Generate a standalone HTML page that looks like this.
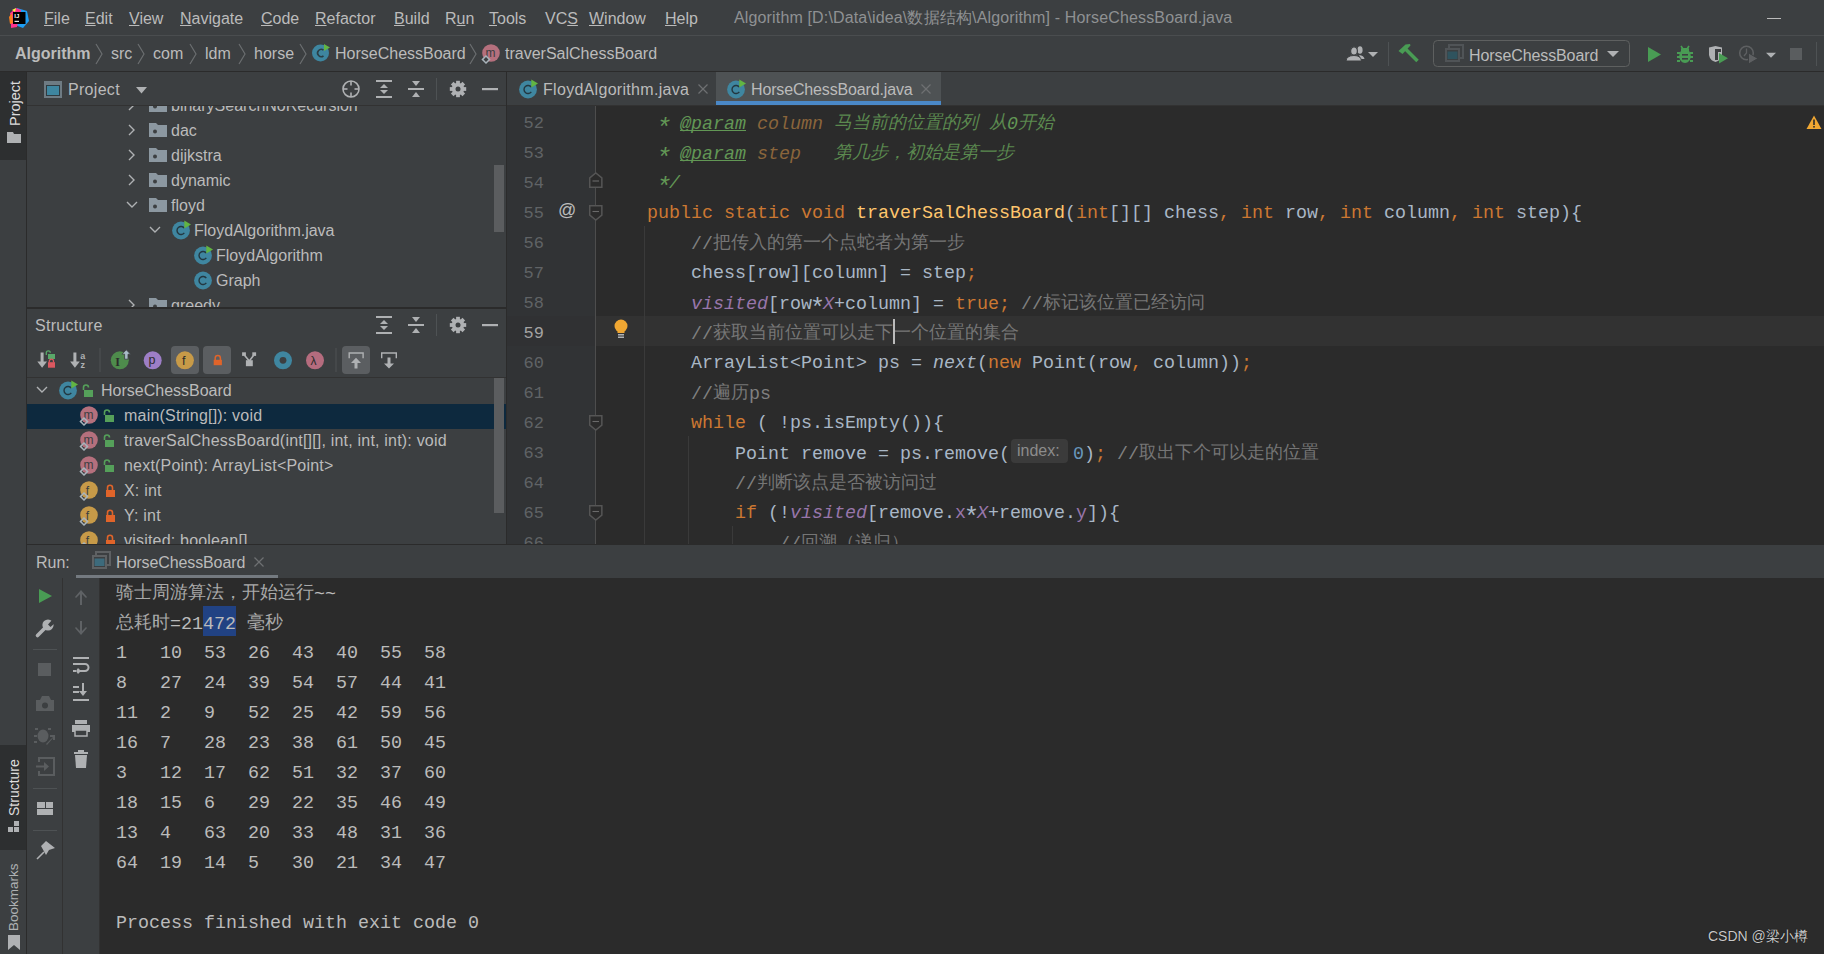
<!DOCTYPE html>
<html><head><meta charset="utf-8">
<style>
*{margin:0;padding:0;box-sizing:border-box}
html,body{width:1824px;height:954px;overflow:hidden;background:#3C3F41;font-family:"Liberation Sans",sans-serif;color:#BBBBBB;font-size:16px}
.a{position:absolute}
.t{position:absolute;white-space:pre;line-height:20px;margin-top:1px}
.m{font-family:"Liberation Mono",monospace}
.u{text-decoration:underline;text-underline-offset:1px;text-decoration-thickness:1px}
.cj{font-size:18px;position:relative;top:-1.5px;opacity:0.88}
svg{position:absolute;overflow:visible}
.code{margin-top:0;line-height:30px;font-size:18.33px;color:#A9B7C6}
.code i{font-style:italic}
.ast{display:inline-block;width:11px;transform:translateY(5px) scale(1.4)}
.inl{display:inline-block;font-family:"Liberation Sans",sans-serif;font-size:16px;color:#8C8C8C;background:#3B3B3B;border-radius:4px;width:57px;height:24px;line-height:24px;padding-left:6px;margin:0 5px 0 1px;vertical-align:3px}
</style></head><body>
<!-- MENU BAR -->
<div class="a" style="left:0;top:35px;width:1824px;height:1px;background:#4A4D4F"></div>
<svg style="left:8px;top:7px" width="22" height="22" viewBox="0 0 22 22">
<polygon points="9,1 19,4 21,14 15,21 7,18" fill="#1E9DF2"/>
<polygon points="2,6 8,1 13,3 9,20 3,21 3,13" fill="#FF318C"/>
<polygon points="1,10 4,6 5,16 2,17" fill="#FC801D"/>
<polygon points="4,3 8,1 7,5" fill="#FCF84A"/>
<rect x="5" y="5" width="12.5" height="12" fill="#000"/>
<text x="6.3" y="11" font-family="Liberation Sans" font-weight="bold" font-size="6" fill="#fff">IJ</text>
<rect x="6.5" y="13.8" width="4.5" height="1.1" fill="#fff"/>
</svg>
<div class="t" style="left:44px;top:7.5px"><span class="u">F</span>ile</div>
<div class="t" style="left:85px;top:7.5px"><span class="u">E</span>dit</div>
<div class="t" style="left:129px;top:7.5px"><span class="u">V</span>iew</div>
<div class="t" style="left:180px;top:7.5px"><span class="u">N</span>avigate</div>
<div class="t" style="left:261px;top:7.5px"><span class="u">C</span>ode</div>
<div class="t" style="left:315px;top:7.5px"><span class="u">R</span>efactor</div>
<div class="t" style="left:394px;top:7.5px"><span class="u">B</span>uild</div>
<div class="t" style="left:445px;top:7.5px">R<span class="u">u</span>n</div>
<div class="t" style="left:489px;top:7.5px"><span class="u">T</span>ools</div>
<div class="t" style="left:545px;top:7.5px">VC<span class="u">S</span></div>
<div class="t" style="left:589px;top:7.5px"><span class="u">W</span>indow</div>
<div class="t" style="left:665px;top:7.5px"><span class="u">H</span>elp</div>
<div class="t" style="left:734px;top:6.5px;color:#8F9193;letter-spacing:0.15px">Algorithm [D:\Data\idea\数据结构\Algorithm] - HorseChessBoard.java</div>
<div class="a" style="left:1767px;top:18px;width:14px;height:1px;background:#BBBBBB"></div>

<!-- NAV BAR -->
<div class="a" style="left:0;top:71px;width:1824px;height:1px;background:#2B2B2B"></div>
<div class="t" style="left:15px;top:43px;font-weight:bold">Algorithm</div>
<div class="t" style="left:111px;top:43px">src</div>
<div class="t" style="left:153px;top:43px">com</div>
<div class="t" style="left:205px;top:43px">ldm</div>
<div class="t" style="left:254px;top:43px">horse</div>
<div class="t" style="left:335px;top:43px">HorseChessBoard</div>
<div class="t" style="left:505px;top:43px">traverSalChessBoard</div>
<svg style="left:0;top:36px" width="500" height="36">
<g stroke="#6B6E70" stroke-width="1.2" fill="none">
<polyline points="96,8 102,18 96,28"/><polyline points="138,8 144,18 138,28"/>
<polyline points="190,8 196,18 190,28"/><polyline points="239,8 245,18 239,28"/>
<polyline points="300,8 306,18 300,28"/><polyline points="470,8 476,18 470,28"/>
</g>
</svg>
<!-- class icon in nav -->
<svg style="left:312px;top:43px" width="19" height="19" viewBox="0 0 19 19">
<circle cx="8.5" cy="10" r="8.5" fill="#3E86A0"/>
<path d="M11.5 7.2 A3.6 3.6 0 1 0 11.5 12.8" stroke="#2B3E45" stroke-width="1.6" fill="none"/>
<polygon points="12,1 18,4.5 12,8" fill="#62B543"/>
</svg>
<!-- method icon in nav -->
<svg style="left:480px;top:43px" width="22" height="22" viewBox="0 0 22 22"><circle cx="11" cy="10" r="8.8" fill="#B5707D"/><text x="5.6" y="14.2" font-family="Liberation Sans" font-size="12" fill="#3C3F41">m</text><rect x="3.5" y="14" width="5" height="5" transform="rotate(45 6 16.5)" fill="#3C3F41" stroke="#A9B4BB" stroke-width="1.5"/></svg>
<!-- right toolbar -->
<svg style="left:1340px;top:36px" width="484" height="36">
<g fill="#AFB1B3">
<ellipse cx="20" cy="14" rx="2.6" ry="3.8"/><path d="M19 19 Q24 19.5 24.5 23 L21 23 Z"/>
<ellipse cx="14" cy="15" rx="3.4" ry="4.2" stroke="#3C3F41" stroke-width="1.2"/>
<path d="M6 25 Q6.5 19.5 14 19.5 Q21 19.5 21.5 25 Z" stroke="#3C3F41" stroke-width="1"/>
<polygon points="28,16 38,16 33,21"/>
</g>
<rect x="48" y="6" width="1" height="24" fill="#4E5254"/>
<g fill="#499C54">
<polygon points="58.5,15 65.5,8.5 70,8 70.5,9.5 62.5,18"/>
<line x1="65" y1="12.5" x2="77.5" y2="25" stroke="#499C54" stroke-width="3.6"/>
</g>
<rect x="93.5" y="4.5" width="196" height="26" rx="4" fill="none" stroke="#5E6060"/>
<g>
<g transform="translate(104 8)"><path d="M5 4 V1 H19 V14 H16" fill="none" stroke="#505457" stroke-width="2"/><rect x="2" y="5" width="13" height="12" fill="#3C3F41" stroke="#505457" stroke-width="2"/><rect x="3.5" y="7.5" width="10" height="7.5" fill="#2F535E"/></g>
</g>
<polygon points="267,15 279,15 273,21" fill="#AFB1B3"/>
<polygon points="308,11 321,18.5 308,26" fill="#499C54"/>
<g fill="#499C54">
<ellipse cx="345" cy="20" rx="5.8" ry="7"/>
<rect x="341" y="12" width="8" height="4" rx="1"/>
<path d="M341 10 L343 13 M349 10 L347 13" stroke="#499C54" stroke-width="1.6"/>
<rect x="337" y="16" width="3" height="2"/><rect x="350" y="16" width="3" height="2"/>
<rect x="337" y="20" width="3" height="2"/><rect x="350" y="20" width="3" height="2"/>
<rect x="337" y="24" width="3" height="2"/><rect x="350" y="24" width="3" height="2"/>
</g>
<g fill="#3C3F41"><rect x="342" y="18" width="6" height="1.6"/><rect x="342" y="22" width="6" height="1.6"/></g>
<path d="M369 11.5 L375.5 10 L382 11.5 L382 19 Q381 24.5 375.5 26 Q370 24.5 369 19 Z" fill="#AFB1B3"/>
<path d="M375 13 H381 V16 H378 V24 H375 Z" fill="#3C3F41"/>
<polygon points="379,17 388,22.3 379,27.5" fill="#499C54"/>
<circle cx="406.5" cy="17" r="6.8" fill="none" stroke="#5E6062" stroke-width="1.6"/>
<path d="M406.5 12.5 V17 L404 20" fill="none" stroke="#5E6062" stroke-width="1.3"/>
<polygon points="408.5,17 418,22.5 408.5,28" fill="#5E6062" stroke="#3C3F41" stroke-width="1"/>
<polygon points="426,16.8 436,16.8 431,21.8" fill="#AFB1B3"/>
<rect x="450" y="12" width="12" height="12" fill="#5A5D5F"/>
<rect x="476" y="6" width="1" height="24" fill="#4E5254"/>
</svg>
<div class="t" style="left:1469px;top:45px;letter-spacing:-0.1px">HorseChessBoard</div>
<!-- LEFT STRIPE -->
<div class="a" style="left:0;top:72px;width:26px;height:882px;background:#3C3F41"></div>
<div class="a" style="left:26px;top:72px;width:1px;height:882px;background:#2B2B2B"></div>
<div class="a" style="left:0;top:72px;width:26px;height:88px;background:#2D2F30"></div>
<div class="t" style="left:5.3px;top:125px;transform:rotate(-90deg);transform-origin:0 0;color:#DDDDDD;font-size:14.5px;width:50px">Project</div>
<svg style="left:7px;top:132px" width="14" height="12"><path d="M0 0 H6 L7 2 H14 V11 H0 Z" fill="#AFB1B3"/></svg>
<div class="a" style="left:0;top:745px;width:26px;height:105px;background:#2D2F30"></div>
<div class="t" style="left:4px;top:815px;transform:rotate(-90deg);transform-origin:0 0;color:#DDDDDD;font-size:14px;width:70px">Structure</div>
<svg style="left:8px;top:821px" width="13" height="13"><g fill="#AFB1B3"><rect x="0" y="6" width="5" height="5"/><rect x="6" y="6" width="5" height="5"/><rect x="6" y="0" width="5" height="5"/></g></svg>
<div class="t" style="left:4px;top:930px;transform:rotate(-90deg);transform-origin:0 0;color:#AFB1B3;font-size:13.5px;width:80px">Bookmarks</div>
<svg style="left:8px;top:935px" width="12" height="16"><path d="M0 0 H12 V15 L6 10 L0 15 Z" fill="#AFB1B3"/></svg>

<!-- PROJECT PANEL -->
<div class="a" style="left:27px;top:105px;width:479px;height:1px;background:#323232"></div>
<svg style="left:44px;top:81px" width="19" height="18"><rect x="0" y="0" width="18" height="17" fill="#6E7B83"/><rect x="2" y="4" width="14" height="11" fill="#2F3B41"/><rect x="3" y="5" width="12" height="9" fill="#3E86A0"/></svg>
<div class="t" style="left:68px;top:79px;letter-spacing:0.3px">Project</div>
<svg style="left:135.5px;top:87px" width="12" height="8"><polygon points="0,0 11,0 5.5,6.5" fill="#AFB1B3"/></svg>
<svg style="left:340px;top:78px" width="170" height="22">
<g fill="none" stroke="#AFB1B3" stroke-width="1.6"><circle cx="11" cy="11" r="8"/><line x1="11" y1="3" x2="11" y2="7.5"/><line x1="11" y1="14.5" x2="11" y2="19"/><line x1="3" y1="11" x2="7.5" y2="11"/><line x1="14.5" y1="11" x2="19" y2="11"/></g>
<g fill="#AFB1B3"><rect x="36" y="2" width="16" height="2"/><rect x="36" y="18" width="16" height="2"/><polygon points="44,6 48,10 40,10"/><polygon points="44,16 48,12 40,12"/></g>
<g fill="#AFB1B3"><rect x="68" y="10" width="16" height="2"/><polygon points="76,8 80,3 72,3"/><polygon points="76,14 80,19 72,19"/></g>
<rect x="96" y="0" width="1" height="22" fill="#4E5254"/>
<circle cx="118" cy="11" r="6.2" fill="#AFB1B3"/><rect x="116.1" y="2.8000000000000007" width="3.8" height="4" fill="#AFB1B3" transform="rotate(0 118 11)"/><rect x="116.1" y="2.8000000000000007" width="3.8" height="4" fill="#AFB1B3" transform="rotate(45 118 11)"/><rect x="116.1" y="2.8000000000000007" width="3.8" height="4" fill="#AFB1B3" transform="rotate(90 118 11)"/><rect x="116.1" y="2.8000000000000007" width="3.8" height="4" fill="#AFB1B3" transform="rotate(135 118 11)"/><rect x="116.1" y="2.8000000000000007" width="3.8" height="4" fill="#AFB1B3" transform="rotate(180 118 11)"/><rect x="116.1" y="2.8000000000000007" width="3.8" height="4" fill="#AFB1B3" transform="rotate(225 118 11)"/><rect x="116.1" y="2.8000000000000007" width="3.8" height="4" fill="#AFB1B3" transform="rotate(270 118 11)"/><rect x="116.1" y="2.8000000000000007" width="3.8" height="4" fill="#AFB1B3" transform="rotate(315 118 11)"/><circle cx="118" cy="11" r="2.5" fill="#3C3F41"/>
<rect x="142" y="10" width="16" height="2.2" fill="#AFB1B3"/>
</svg>
<!-- project scrollbar -->
<div class="a" style="left:494px;top:165px;width:10px;height:67px;background:#5B5D5F"></div>
<div class="a" style="left:27px;top:106px;width:468px;height:202px;overflow:hidden">
<svg style="left:100px;top:-7px" width="10" height="12"><polyline points="2,1 7,6 2,11" fill="none" stroke="#AFB1B3" stroke-width="1.4"/></svg>
<svg style="left:122px;top:-8px" width="19" height="15"><path d="M0 0 H7 L9 2 H18 V14 H0 Z" fill="#8C98A1"/><circle cx="6" cy="8.5" r="2" fill="#3C3F41"/></svg>
<div class="t" style="left:144px;top:-11px">binarySearchNoRecursion</div>
<svg style="left:100px;top:18px" width="10" height="12"><polyline points="2,1 7,6 2,11" fill="none" stroke="#AFB1B3" stroke-width="1.4"/></svg>
<svg style="left:122px;top:17px" width="19" height="15"><path d="M0 0 H7 L9 2 H18 V14 H0 Z" fill="#8C98A1"/><circle cx="6" cy="8.5" r="2" fill="#3C3F41"/></svg>
<div class="t" style="left:144px;top:14px">dac</div>
<svg style="left:100px;top:43px" width="10" height="12"><polyline points="2,1 7,6 2,11" fill="none" stroke="#AFB1B3" stroke-width="1.4"/></svg>
<svg style="left:122px;top:42px" width="19" height="15"><path d="M0 0 H7 L9 2 H18 V14 H0 Z" fill="#8C98A1"/><circle cx="6" cy="8.5" r="2" fill="#3C3F41"/></svg>
<div class="t" style="left:144px;top:39px">dijkstra</div>
<svg style="left:100px;top:68px" width="10" height="12"><polyline points="2,1 7,6 2,11" fill="none" stroke="#AFB1B3" stroke-width="1.4"/></svg>
<svg style="left:122px;top:67px" width="19" height="15"><path d="M0 0 H7 L9 2 H18 V14 H0 Z" fill="#8C98A1"/><circle cx="6" cy="8.5" r="2" fill="#3C3F41"/></svg>
<div class="t" style="left:144px;top:64px">dynamic</div>
<svg style="left:99px;top:94px" width="12" height="10"><polyline points="1,2 6,7 11,2" fill="none" stroke="#AFB1B3" stroke-width="1.4"/></svg>
<svg style="left:122px;top:92px" width="19" height="15"><path d="M0 0 H7 L9 2 H18 V14 H0 Z" fill="#8C98A1"/><circle cx="6" cy="8.5" r="2" fill="#3C3F41"/></svg>
<div class="t" style="left:144px;top:89px">floyd</div>
<svg style="left:122px;top:119px" width="12" height="10"><polyline points="1,2 6,7 11,2" fill="none" stroke="#AFB1B3" stroke-width="1.4"/></svg>
<svg style="left:144.5px;top:114px" width="20" height="20" viewBox="0 0 20 20"><circle cx="9" cy="10.5" r="8.9" fill="#3F86A0"/><path d="M12.3 8.2 A4 4 0 1 0 12.3 12.8" stroke="#233740" stroke-width="1.4" fill="none"/><polygon points="12.3,0.6 19,4.5 12.3,8.4" fill="#62B543"/></svg>
<div class="t" style="left:167px;top:114px">FloydAlgorithm.java</div>
<svg style="left:167px;top:139px" width="20" height="20" viewBox="0 0 20 20"><circle cx="9" cy="10.5" r="8.9" fill="#3F86A0"/><path d="M12.3 8.2 A4 4 0 1 0 12.3 12.8" stroke="#233740" stroke-width="1.4" fill="none"/><polygon points="12.3,0.6 19,4.5 12.3,8.4" fill="#62B543"/></svg>
<div class="t" style="left:189px;top:139px">FloydAlgorithm</div>
<svg style="left:167px;top:164px" width="20" height="20" viewBox="0 0 20 20"><circle cx="9" cy="10.5" r="8.9" fill="#3F86A0"/><path d="M12.3 8.2 A4 4 0 1 0 12.3 12.8" stroke="#233740" stroke-width="1.4" fill="none"/></svg>
<div class="t" style="left:189px;top:164px">Graph</div>
<svg style="left:100px;top:193px" width="10" height="12"><polyline points="2,1 7,6 2,11" fill="none" stroke="#AFB1B3" stroke-width="1.4"/></svg>
<svg style="left:122px;top:192px" width="19" height="15"><path d="M0 0 H7 L9 2 H18 V14 H0 Z" fill="#8C98A1"/><circle cx="6" cy="8.5" r="2" fill="#3C3F41"/></svg>
<div class="t" style="left:144px;top:189px">greedy</div>
</div><div class="a" style="left:27px;top:307px;width:479px;height:2px;background:#2B2B2B"></div>
<div class="t" style="left:35px;top:314.5px;letter-spacing:0.3px">Structure</div>
<svg style="left:370px;top:314px" width="140" height="22">
<g fill="#AFB1B3"><rect x="6" y="2" width="16" height="2"/><rect x="6" y="18" width="16" height="2"/><polygon points="14,6 18,10 10,10"/><polygon points="14,16 18,12 10,12"/></g>
<g fill="#AFB1B3"><rect x="38" y="10" width="16" height="2"/><polygon points="46,8 50,3 42,3"/><polygon points="46,14 50,19 42,19"/></g>
<rect x="66" y="0" width="1" height="22" fill="#4E5254"/>
<circle cx="88" cy="11" r="6.2" fill="#AFB1B3"/><rect x="86.1" y="2.8000000000000007" width="3.8" height="4" fill="#AFB1B3" transform="rotate(0 88 11)"/><rect x="86.1" y="2.8000000000000007" width="3.8" height="4" fill="#AFB1B3" transform="rotate(45 88 11)"/><rect x="86.1" y="2.8000000000000007" width="3.8" height="4" fill="#AFB1B3" transform="rotate(90 88 11)"/><rect x="86.1" y="2.8000000000000007" width="3.8" height="4" fill="#AFB1B3" transform="rotate(135 88 11)"/><rect x="86.1" y="2.8000000000000007" width="3.8" height="4" fill="#AFB1B3" transform="rotate(180 88 11)"/><rect x="86.1" y="2.8000000000000007" width="3.8" height="4" fill="#AFB1B3" transform="rotate(225 88 11)"/><rect x="86.1" y="2.8000000000000007" width="3.8" height="4" fill="#AFB1B3" transform="rotate(270 88 11)"/><rect x="86.1" y="2.8000000000000007" width="3.8" height="4" fill="#AFB1B3" transform="rotate(315 88 11)"/><circle cx="88" cy="11" r="2.5" fill="#3C3F41"/>
<rect x="112" y="10" width="16" height="2.2" fill="#AFB1B3"/>
</svg>
<div class="a" style="left:27px;top:377px;width:479px;height:1px;background:#323232"></div>
<div class="a" style="left:171px;top:346px;width:28px;height:28px;border-radius:4px;background:#5B5E61"></div>
<div class="a" style="left:203px;top:346px;width:28px;height:28px;border-radius:4px;background:#5B5E61"></div>
<div class="a" style="left:342px;top:346px;width:28px;height:28px;border-radius:4px;background:#5B5E61"></div>
<svg style="left:0;top:342px" width="420" height="36">
<g fill="#AFB1B3"><rect x="40.6" y="10.5" width="3" height="10"/><polygon points="37.3,19.5 47,19.5 42.1,25.8"/></g>
<path d="M46.3 13 V10.8 A2 2 0 0 1 50.3 10.8" fill="none" stroke="#59A869" stroke-width="1.3"/><rect x="48" y="12" width="7" height="5" fill="#59A869"/>
<path d="M49.3 20.5 V19.2 A2 2 0 0 1 53.5 19.2 V20.5" fill="none" stroke="#DB5860" stroke-width="1.3"/><rect x="48" y="20.2" width="7" height="5.5" fill="#DB5860"/>
<g fill="#AFB1B3"><rect x="73.4" y="10.5" width="3" height="10"/><polygon points="70.1,19.5 79.8,19.5 74.9,25.8"/></g>
<text x="80.3" y="16.8" font-family="Liberation Sans" font-weight="bold" font-size="9" fill="#AFB1B3">a</text><text x="80.6" y="25.6" font-family="Liberation Sans" font-weight="bold" font-size="9" fill="#AFB1B3">z</text>
<rect x="99.5" y="6" width="1" height="24" fill="#4E5254"/>
<circle cx="119.8" cy="18.3" r="9" fill="#4E8C4C"/><text x="115.3" y="23.5" font-family="Liberation Serif" font-weight="bold" font-size="12" fill="#2B2B2B">I</text>
<polygon points="126.3,7.8 130.6,12.2 128,12.2 128,17.2 124.6,17.2 124.6,12.2 122,12.2" fill="#A9BCC8" stroke="#3C3F41" stroke-width="0.8"/>
<circle cx="152.7" cy="18.3" r="9" fill="#9D7EC6"/><text x="148.5" y="22.2" font-family="Liberation Sans" font-size="12.5" fill="#2B2B2B">p</text>
<circle cx="184.9" cy="18.3" r="9" fill="#C79A48"/><text x="182" y="23" font-family="Liberation Sans" font-size="12.5" fill="#2B2B2B">f</text>
<path d="M215.2 18 V16.2 A2.6 2.6 0 0 1 220.4 16.2 V18" fill="none" stroke="#E0642A" stroke-width="1.5"/><rect x="213.7" y="17.8" width="8.2" height="5.4" fill="#E0642A"/>
<g fill="#AFB1B3"><rect x="242.1" y="10.3" width="3.8" height="3.6"/><rect x="252.3" y="10.3" width="3.8" height="3.6"/><rect x="245.9" y="18.2" width="6.9" height="6"/>
<path d="M244.5 13.2 L249.3 19 L253.7 13.2" fill="none" stroke="#AFB1B3" stroke-width="1.6"/></g>
<circle cx="283" cy="18.3" r="9" fill="#3F86A0"/><circle cx="283" cy="18.3" r="3.4" fill="#3C3F41"/>
<circle cx="315" cy="18.3" r="9" fill="#B56C7E"/><text x="310.6" y="23" font-family="Liberation Sans" font-size="12" fill="#2B2B2B">λ</text>
<rect x="335.5" y="6" width="1" height="24" fill="#4E5254"/>
<path d="M349.2 16.3 V11 H363.1 V16.3" fill="none" stroke="#AFB1B3" stroke-width="1.4"/>
<polygon points="356,15.8 361,21 357.5,21 357.5,26.6 354.5,26.6 354.5,21 351,21" fill="#AFB1B3"/>
<path d="M381.7 16.3 V11 H396.3 V16.3" fill="none" stroke="#AFB1B3" stroke-width="1.4"/>
<polygon points="389,26.6 394,21.4 390.5,21.4 390.5,15.5 387.5,15.5 387.5,21.4 384,21.4" fill="#AFB1B3"/>
</svg>
<div class="a" style="left:27px;top:378px;width:479px;height:166px;overflow:hidden">
<div class="a" style="left:0;top:26px;width:479px;height:25px;background:#0D293E"></div>
<svg style="left:9px;top:7px" width="12" height="10"><polyline points="1,2 6,7 11,2" fill="none" stroke="#AFB1B3" stroke-width="1.4"/></svg>
<svg style="left:32px;top:2px" width="20" height="20" viewBox="0 0 20 20"><circle cx="9" cy="10.5" r="8.9" fill="#3F86A0"/><path d="M12.3 8.2 A4 4 0 1 0 12.3 12.8" stroke="#233740" stroke-width="1.4" fill="none"/><polygon points="12.3,0.6 19,4.5 12.3,8.4" fill="#62B543"/></svg>
<svg style="left:54px;top:6px" width="13" height="14"><path d="M2.5 6 V3.5 A2.5 2.5 0 0 1 7.5 3.5" fill="none" stroke="#55A05A" stroke-width="1.6"/><rect x="3" y="6" width="9" height="7" fill="#55A05A"/></svg>
<div class="t" style="left:74px;top:2px">HorseChessBoard</div>
<svg style="left:51px;top:27px" width="22" height="22" viewBox="0 0 22 22"><circle cx="11" cy="10" r="8.8" fill="#B5707D"/><text x="5.6" y="14.2" font-family="Liberation Sans" font-size="12" fill="#3C3F41">m</text><rect x="3.5" y="14" width="5" height="5" transform="rotate(45 6 16.5)" fill="none" stroke="#A9B4BB" stroke-width="1.5"/></svg>
<svg style="left:75px;top:31px" width="13" height="14"><path d="M2.5 6 V3.5 A2.5 2.5 0 0 1 7.5 3.5" fill="none" stroke="#55A05A" stroke-width="1.6"/><rect x="3" y="6" width="9" height="7" fill="#55A05A"/></svg>
<div class="t" style="left:97px;top:27px;letter-spacing:0.2px">main(String[]): void</div>
<svg style="left:51px;top:52px" width="22" height="22" viewBox="0 0 22 22"><circle cx="11" cy="10" r="8.8" fill="#B5707D"/><text x="5.6" y="14.2" font-family="Liberation Sans" font-size="12" fill="#3C3F41">m</text><rect x="3.5" y="14" width="5" height="5" transform="rotate(45 6 16.5)" fill="none" stroke="#A9B4BB" stroke-width="1.5"/></svg>
<svg style="left:75px;top:56px" width="13" height="14"><path d="M2.5 6 V3.5 A2.5 2.5 0 0 1 7.5 3.5" fill="none" stroke="#55A05A" stroke-width="1.6"/><rect x="3" y="6" width="9" height="7" fill="#55A05A"/></svg>
<div class="t" style="left:97px;top:52px;letter-spacing:0.2px">traverSalChessBoard(int[][], int, int, int): void</div>
<svg style="left:51px;top:77px" width="22" height="22" viewBox="0 0 22 22"><circle cx="11" cy="10" r="8.8" fill="#B5707D"/><text x="5.6" y="14.2" font-family="Liberation Sans" font-size="12" fill="#3C3F41">m</text><rect x="3.5" y="14" width="5" height="5" transform="rotate(45 6 16.5)" fill="none" stroke="#A9B4BB" stroke-width="1.5"/></svg>
<svg style="left:75px;top:81px" width="13" height="14"><path d="M2.5 6 V3.5 A2.5 2.5 0 0 1 7.5 3.5" fill="none" stroke="#55A05A" stroke-width="1.6"/><rect x="3" y="6" width="9" height="7" fill="#55A05A"/></svg>
<div class="t" style="left:97px;top:77px;letter-spacing:0.2px">next(Point): ArrayList&lt;Point&gt;</div>
<svg style="left:51px;top:102px" width="22" height="22" viewBox="0 0 22 22"><circle cx="11" cy="10" r="8.8" fill="#C79A48"/><text x="7.8" y="14.5" font-family="Liberation Sans" font-size="12" fill="#3C3F41">f</text><rect x="3.5" y="14" width="5" height="5" transform="rotate(45 6 16.5)" fill="none" stroke="#A9B4BB" stroke-width="1.5"/></svg>
<svg style="left:77px;top:106px" width="13" height="14"><path d="M3.5 6 V3.8 A2.5 2.5 0 0 1 8.5 3.8 V6" fill="none" stroke="#E0642A" stroke-width="1.6"/><rect x="2" y="6" width="9" height="7" fill="#E0642A"/></svg>
<div class="t" style="left:97px;top:102px;letter-spacing:0.2px">X: int</div>
<svg style="left:51px;top:127px" width="22" height="22" viewBox="0 0 22 22"><circle cx="11" cy="10" r="8.8" fill="#C79A48"/><text x="7.8" y="14.5" font-family="Liberation Sans" font-size="12" fill="#3C3F41">f</text><rect x="3.5" y="14" width="5" height="5" transform="rotate(45 6 16.5)" fill="none" stroke="#A9B4BB" stroke-width="1.5"/></svg>
<svg style="left:77px;top:131px" width="13" height="14"><path d="M3.5 6 V3.8 A2.5 2.5 0 0 1 8.5 3.8 V6" fill="none" stroke="#E0642A" stroke-width="1.6"/><rect x="2" y="6" width="9" height="7" fill="#E0642A"/></svg>
<div class="t" style="left:97px;top:127px;letter-spacing:0.2px">Y: int</div>
<svg style="left:51px;top:152px" width="22" height="22" viewBox="0 0 22 22"><circle cx="11" cy="10" r="8.8" fill="#C79A48"/><text x="7.8" y="14.5" font-family="Liberation Sans" font-size="12" fill="#3C3F41">f</text><rect x="3.5" y="14" width="5" height="5" transform="rotate(45 6 16.5)" fill="none" stroke="#A9B4BB" stroke-width="1.5"/></svg>
<svg style="left:77px;top:156px" width="13" height="14"><path d="M3.5 6 V3.8 A2.5 2.5 0 0 1 8.5 3.8 V6" fill="none" stroke="#E0642A" stroke-width="1.6"/><rect x="2" y="6" width="9" height="7" fill="#E0642A"/></svg>
<div class="t" style="left:97px;top:152px;letter-spacing:0.2px">visited: boolean[]</div>
</div>
<div class="a" style="left:494px;top:378px;width:10px;height:135px;background:#5B5D5F"></div><div class="a" style="left:506px;top:72px;width:1px;height:472px;background:#2B2B2B"></div>
<div class="a" style="left:507px;top:105px;width:1317px;height:1px;background:#323232"></div>
<div class="a" style="left:716px;top:72px;width:225px;height:33px;background:#4E5254"></div>
<div class="a" style="left:716px;top:101px;width:225px;height:4px;background:#4A88C7"></div>
<svg style="left:519px;top:79px" width="20" height="20" viewBox="0 0 20 20"><circle cx="9" cy="10.5" r="8.9" fill="#3F86A0"/><path d="M12.3 8.2 A4 4 0 1 0 12.3 12.8" stroke="#233740" stroke-width="1.4" fill="none"/><polygon points="12.3,0.6 19,4.5 12.3,8.4" fill="#62B543"/></svg>
<div class="t" style="left:543px;top:79px;letter-spacing:0.3px">FloydAlgorithm.java</div>
<svg style="left:727px;top:79px" width="20" height="20" viewBox="0 0 20 20"><circle cx="9" cy="10.5" r="8.9" fill="#3F86A0"/><path d="M12.3 8.2 A4 4 0 1 0 12.3 12.8" stroke="#233740" stroke-width="1.4" fill="none"/><polygon points="12.3,0.6 19,4.5 12.3,8.4" fill="#62B543"/></svg>
<div class="t" style="left:751px;top:79px;letter-spacing:-0.15px">HorseChessBoard.java</div>
<svg style="left:698px;top:84px" width="10" height="10"><g stroke="#6E7072" stroke-width="1.3"><line x1="0.5" y1="0.5" x2="9.5" y2="9.5"/><line x1="9.5" y1="0.5" x2="0.5" y2="9.5"/></g></svg>
<svg style="left:921px;top:84px" width="10" height="10"><g stroke="#6E7072" stroke-width="1.3"><line x1="0.5" y1="0.5" x2="9.5" y2="9.5"/><line x1="9.5" y1="0.5" x2="0.5" y2="9.5"/></g></svg>
<div class="a" style="left:507px;top:106px;width:1317px;height:438px;background:#2B2B2B;overflow:hidden">
<div class="a" style="left:0;top:0;width:89px;height:438px;background:#313335"></div>
<div class="a" style="left:89px;top:210px;width:1300px;height:30px;background:#323232"></div>
<div class="a" style="left:137px;top:120px;width:1px;height:500px;background:#3A3A3A"></div>
<div class="a" style="left:181px;top:330px;width:1px;height:500px;background:#3A3A3A"></div>
<div class="a" style="left:225px;top:420px;width:1px;height:500px;background:#3A3A3A"></div>
<div class="a" style="left:88px;top:0;width:1px;height:438px;background:#4D4D4D"></div>
<svg style="left:82px;top:66px" width="14" height="16"><polygon points="0.75,15.25 0.75,5.8 6.8,0.9 12.85,5.8 12.85,15.25" fill="#2B2B2B" stroke="#555555" stroke-width="1.5"/><line x1="3.5" y1="9" x2="10" y2="9" stroke="#6A6A6A" stroke-width="1.1"/></svg>
<svg style="left:82px;top:99px" width="14" height="16"><polygon points="0.75,0.75 12.85,0.75 12.85,10.2 6.8,15.1 0.75,10.2" fill="#2B2B2B" stroke="#555555" stroke-width="1.5"/><line x1="3.5" y1="6.5" x2="10" y2="6.5" stroke="#6A6A6A" stroke-width="1.1"/></svg>
<svg style="left:82px;top:309px" width="14" height="16"><polygon points="0.75,0.75 12.85,0.75 12.85,10.2 6.8,15.1 0.75,10.2" fill="#2B2B2B" stroke="#555555" stroke-width="1.5"/><line x1="3.5" y1="6.5" x2="10" y2="6.5" stroke="#6A6A6A" stroke-width="1.1"/></svg>
<svg style="left:82px;top:399px" width="14" height="16"><polygon points="0.75,0.75 12.85,0.75 12.85,10.2 6.8,15.1 0.75,10.2" fill="#2B2B2B" stroke="#555555" stroke-width="1.5"/><line x1="3.5" y1="6.5" x2="10" y2="6.5" stroke="#6A6A6A" stroke-width="1.1"/></svg>
<div class="t" style="left:51px;top:90.5px;font-size:18px;color:#BBBBBB;line-height:24px">@</div>
<div class="a" style="left:0;top:210px;width:88px;height:30px;background:#303133"></div>
<svg style="left:106px;top:213px" width="16" height="22"><circle cx="8" cy="7" r="6.5" fill="#F0A732"/><rect x="4.5" y="10" width="7" height="4" fill="#F0A732"/><rect x="5" y="15" width="6" height="1.5" fill="#AFB1B3"/><rect x="5" y="17.5" width="6" height="1.5" fill="#AFB1B3"/></svg>
<svg style="left:1299px;top:9px" width="16" height="15"><polygon points="8,0.5 15.5,14 0.5,14" fill="#F0A732"/><rect x="7.2" y="4.5" width="1.6" height="5.5" fill="#2B2B2B"/><rect x="7.2" y="11" width="1.6" height="1.6" fill="#2B2B2B"/></svg>
<div class="t m" style="left:-7px;width:44px;text-align:right;top:1.5px;line-height:30px;font-size:17px;color:#606366">52</div>
<div class="t m" style="left:-7px;width:44px;text-align:right;top:31.5px;line-height:30px;font-size:17px;color:#606366">53</div>
<div class="t m" style="left:-7px;width:44px;text-align:right;top:61.5px;line-height:30px;font-size:17px;color:#606366">54</div>
<div class="t m" style="left:-7px;width:44px;text-align:right;top:91.5px;line-height:30px;font-size:17px;color:#606366">55</div>
<div class="t m" style="left:-7px;width:44px;text-align:right;top:121.5px;line-height:30px;font-size:17px;color:#606366">56</div>
<div class="t m" style="left:-7px;width:44px;text-align:right;top:151.5px;line-height:30px;font-size:17px;color:#606366">57</div>
<div class="t m" style="left:-7px;width:44px;text-align:right;top:181.5px;line-height:30px;font-size:17px;color:#606366">58</div>
<div class="t m" style="left:-7px;width:44px;text-align:right;top:211.5px;line-height:30px;font-size:17px;color:#A4A3A3">59</div>
<div class="t m" style="left:-7px;width:44px;text-align:right;top:241.5px;line-height:30px;font-size:17px;color:#606366">60</div>
<div class="t m" style="left:-7px;width:44px;text-align:right;top:271.5px;line-height:30px;font-size:17px;color:#606366">61</div>
<div class="t m" style="left:-7px;width:44px;text-align:right;top:301.5px;line-height:30px;font-size:17px;color:#606366">62</div>
<div class="t m" style="left:-7px;width:44px;text-align:right;top:331.5px;line-height:30px;font-size:17px;color:#606366">63</div>
<div class="t m" style="left:-7px;width:44px;text-align:right;top:361.5px;line-height:30px;font-size:17px;color:#606366">64</div>
<div class="t m" style="left:-7px;width:44px;text-align:right;top:391.5px;line-height:30px;font-size:17px;color:#606366">65</div>
<div class="t m" style="left:-7px;width:44px;text-align:right;top:421.5px;line-height:30px;font-size:17px;color:#606366">66</div>
<div class="t m code" style="left:96px;top:3px">     <span style="color:#629755;font-style:italic"><span class="ast">*</span> </span><span style="color:#629755;font-style:italic;text-decoration:underline;text-underline-offset:1px;text-decoration-skip-ink:none">@param</span><span style="color:#629755;font-style:italic"> </span><span style="color:#8A653B;font-style:italic">column</span><span style="color:#629755;font-style:italic"> <span class="cj">马当前的位置的列</span> <span class="cj">从</span>0<span class="cj">开始</span></span></div>
<div class="t m code" style="left:96px;top:33px">     <span style="color:#629755;font-style:italic"><span class="ast">*</span> </span><span style="color:#629755;font-style:italic;text-decoration:underline;text-underline-offset:1px;text-decoration-skip-ink:none">@param</span><span style="color:#629755;font-style:italic"> </span><span style="color:#8A653B;font-style:italic">step</span><span style="color:#629755;font-style:italic">   <span class="cj">第几步，初始是第一步</span></span></div>
<div class="t m code" style="left:96px;top:63px">     <span style="color:#629755;font-style:italic"><span class="ast">*</span>/</span></div>
<div class="t m code" style="left:96px;top:93px">    <span style="color:#CC7832">public static void </span><span style="color:#FFC66D">traverSalChessBoard</span>(<span style="color:#CC7832">int</span>[][] chess<span style="color:#CC7832">, int </span>row<span style="color:#CC7832">, int </span>column<span style="color:#CC7832">, int </span>step){</div>
<div class="t m code" style="left:96px;top:123px">        <span style="color:#808080">//<span class="cj">把传入的第一个点蛇者为第一步</span></span></div>
<div class="t m code" style="left:96px;top:153px">        chess[row][column] = step<span style="color:#CC7832">;</span></div>
<div class="t m code" style="left:96px;top:183px">        <span style="color:#9876AA;font-style:italic">visited</span>[row<span class="ast">*</span><span style="color:#9876AA;font-style:italic">X</span>+column] = <span style="color:#CC7832">true;</span> <span style="color:#808080">//<span class="cj">标记该位置已经访问</span></span></div>
<div class="t m code" style="left:96px;top:213px">        <span style="color:#808080">//<span class="cj">获取当前位置可以走下一个位置的集合</span></span></div>
<div class="t m code" style="left:96px;top:243px">        ArrayList&lt;Point&gt; ps = <i>next</i>(<span style="color:#CC7832">new</span> Point(row<span style="color:#CC7832">,</span> column))<span style="color:#CC7832">;</span></div>
<div class="t m code" style="left:96px;top:273px">        <span style="color:#808080">//<span class="cj">遍历</span>ps</span></div>
<div class="t m code" style="left:96px;top:303px">        <span style="color:#CC7832">while</span> ( !ps.isEmpty()){</div>
<div class="t m code" style="left:96px;top:333px">            Point remove = ps.remove(<span class="inl">index:</span><span style="color:#6897BB">0</span>)<span style="color:#CC7832">;</span> <span style="color:#808080">//<span class="cj">取出下个可以走的位置</span></span></div>
<div class="t m code" style="left:96px;top:363px">            <span style="color:#808080">//<span class="cj">判断该点是否被访问过</span></span></div>
<div class="t m code" style="left:96px;top:393px">            <span style="color:#CC7832">if</span> (!<span style="color:#9876AA;font-style:italic">visited</span>[remove.<span style="color:#9876AA">x</span><span class="ast">*</span><span style="color:#9876AA;font-style:italic">X</span>+remove.<span style="color:#9876AA">y</span>]){</div>
<div class="t m code" style="left:96px;top:423px">                <span style="color:#808080">//<span class="cj">回溯（递归）</span></span></div>
<div class="a" style="left:386px;top:213px;width:2px;height:25px;background:#BBBBBB"></div>
</div><div class="a" style="left:27px;top:544px;width:1797px;height:1px;background:#2B2B2B"></div>
<div class="t" style="left:36px;top:552px">Run:</div>
<svg style="left:91px;top:551px" width="22" height="20"><path d="M5 4 V1 H19 V14 H16" fill="none" stroke="#5E6163" stroke-width="2"/><rect x="2" y="5" width="13" height="12" fill="#3C3F41" stroke="#5E6163" stroke-width="2"/><rect x="3.5" y="7.5" width="10" height="7.5" fill="#3D6B7C"/></svg>
<div class="t" style="left:116px;top:552px;letter-spacing:-0.1px">HorseChessBoard</div>
<svg style="left:254px;top:557px" width="10" height="10"><g stroke="#6E7072" stroke-width="1.3"><line x1="0.5" y1="0.5" x2="9.5" y2="9.5"/><line x1="9.5" y1="0.5" x2="0.5" y2="9.5"/></g></svg>
<div class="a" style="left:76px;top:575px;width:202px;height:3px;background:#747A80"></div>
<div class="a" style="left:62px;top:578px;width:1px;height:376px;background:#323232"></div>
<div class="a" style="left:99px;top:578px;width:1px;height:376px;background:#323232"></div>
<svg style="left:27px;top:578px" width="35" height="376">
<polygon points="12,11 25,18 12,25" fill="#499C54"/>
<line x1="10.5" y1="57.5" x2="19" y2="49" stroke="#AFB1B3" stroke-width="3.6" stroke-linecap="round"/>
<circle cx="21" cy="47" r="5.6" fill="#AFB1B3"/>
<polygon points="21,46.5 25,42 28,45 23.5,49" fill="#3C3F41"/>
<rect x="6" y="71" width="24" height="1" fill="#4E5254"/>
<rect x="11" y="85" width="13" height="13" fill="#5A5D5F"/>
<path d="M9 122 H13 L15 118 H22 L24 122 H27 V133 H9 Z" fill="#5A5D5F"/><circle cx="18" cy="127.5" r="3" fill="#3C3F41"/>
<g fill="#5A5D5F"><ellipse cx="16" cy="158" rx="5.5" ry="6.5"/><rect x="8" y="150" width="3" height="2"/><rect x="21" y="150" width="3" height="2"/><rect x="7" y="157" width="3" height="2"/><rect x="7" y="163" width="3" height="2"/></g>
<polygon points="19,166 26,159 23,159 23,157 28,157 28,162 26,162 26,160 20,167" fill="#5A5D5F"/>
<path d="M12 184 V180 H27 V197 H12 V193" fill="none" stroke="#5A5D5F" stroke-width="2"/><polygon points="9,187.5 17,187.5 17,184 22,188.5 17,193 17,189.5 9,189.5" fill="#5A5D5F"/>
<rect x="6" y="210" width="24" height="1" fill="#4E5254"/>
<g fill="#AFB1B3"><rect x="10" y="224" width="8" height="6"/><rect x="19" y="224" width="7" height="6"/><rect x="10" y="231" width="16" height="6"/></g>
<rect x="6" y="252" width="24" height="1" fill="#4E5254"/>
<line x1="10" y1="281" x2="17" y2="274" stroke="#AFB1B3" stroke-width="1.6"/><polygon points="19,263 28,270 22,272 19,277 14,268" fill="#AFB1B3"/>
</svg>
<svg style="left:62px;top:578px" width="37" height="376">
<g fill="#5F6265"><rect x="18" y="14" width="2" height="13"/><polygon points="13,19 19,12 25,19 24,20 19,15 14,20"/></g>
<g fill="#5F6265"><rect x="18" y="43" width="2" height="13"/><polygon points="13,50 19,57 25,50 24,49 19,54 14,49"/></g>
<g fill="#AFB1B3"><rect x="11" y="79" width="16" height="2"/><path d="M11 86 H23 A3.5 3.5 0 0 1 23 93 H17" fill="none" stroke="#AFB1B3" stroke-width="2"/><polygon points="16,90 19,93 16,96 14,93"/><rect x="11" y="92" width="3" height="2"/></g>
<g fill="#AFB1B3"><rect x="11" y="108" width="6" height="2"/><rect x="11" y="113" width="6" height="2"/><rect x="11" y="121" width="16" height="2"/><rect x="20" y="105" width="2" height="11"/><polygon points="17,113 21,118 25,113"/></g>
<g fill="#AFB1B3"><rect x="13" y="142" width="12" height="4"/><rect x="10" y="147" width="18" height="7"/><rect x="13" y="152" width="12" height="6" fill="#3C3F41" stroke="#AFB1B3" stroke-width="1.5"/></g>
<g fill="#AFB1B3"><rect x="12" y="174" width="14" height="2"/><rect x="16" y="172" width="6" height="2"/><path d="M13 177 H25 L24 190 H14 Z"/></g>
</svg>
<div class="a" style="left:100px;top:578px;width:1724px;height:376px;background:#2B2B2B"></div>
<div class="a" style="left:203px;top:606px;width:33px;height:30px;background:#214283"></div>
<div class="t m code" style="left:116px;top:579px;color:#BBBBBB"><span class="cj">骑士周游算法，开始运行</span>~~</div>
<div class="t m code" style="left:116px;top:609px;color:#BBBBBB"><span class="cj">总耗时</span>=21472 <span class="cj">毫秒</span></div>
<div class="t m code" style="left:116px;top:639px;color:#BBBBBB">1   10  53  26  43  40  55  58  </div>
<div class="t m code" style="left:116px;top:669px;color:#BBBBBB">8   27  24  39  54  57  44  41  </div>
<div class="t m code" style="left:116px;top:699px;color:#BBBBBB">11  2   9   52  25  42  59  56  </div>
<div class="t m code" style="left:116px;top:729px;color:#BBBBBB">16  7   28  23  38  61  50  45  </div>
<div class="t m code" style="left:116px;top:759px;color:#BBBBBB">3   12  17  62  51  32  37  60  </div>
<div class="t m code" style="left:116px;top:789px;color:#BBBBBB">18  15  6   29  22  35  46  49  </div>
<div class="t m code" style="left:116px;top:819px;color:#BBBBBB">13  4   63  20  33  48  31  36  </div>
<div class="t m code" style="left:116px;top:849px;color:#BBBBBB">64  19  14  5   30  21  34  47  </div>
<div class="t m code" style="left:116px;top:879px;color:#BBBBBB"></div>
<div class="t m code" style="left:116px;top:909px;color:#BBBBBB">Process finished with exit code 0</div>
<div class="t" style="left:1708px;top:924.5px;font-size:14px;color:#C8C8C8;text-shadow:0 0 1px #000">CSDN @梁小樽</div></body></html>
